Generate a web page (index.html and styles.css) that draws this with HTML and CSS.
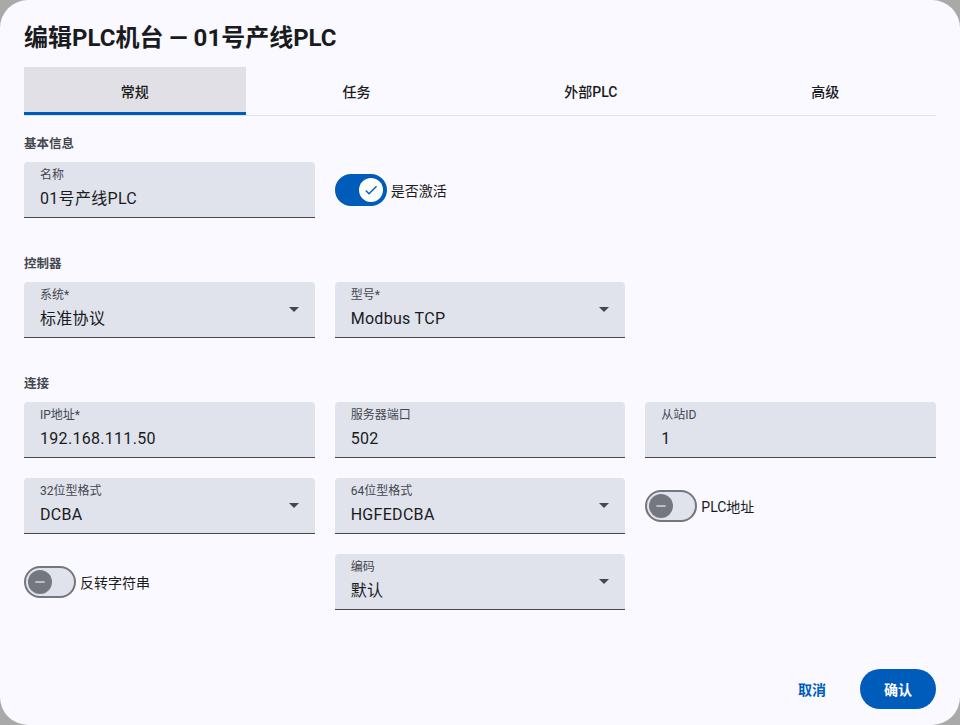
FILE: index.html
```html
<!DOCTYPE html>
<html lang="zh-CN">
<head>
    <meta charset="UTF-8">
    <meta name="viewport" content="width=device-width, initial-scale=1.0">
    <title>编辑PLC机台</title>
    <link rel="stylesheet" href="styles.css">
</head>
<body>
    <div class="dialog">
        <h2 class="dialog-title">编辑PLC机台 — 01号产线PLC</h2>

        <nav class="tabs">
            <div class="tab active">常规</div>
            <div class="tab">任务</div>
            <div class="tab">外部PLC</div>
            <div class="tab">高级</div>
        </nav>

        <!-- 基本信息 -->
        <section class="section first">
            <h3 class="section-title">基本信息</h3>
            <div class="form-grid">
                <div class="field">
                    <span class="field-label">名称</span>
                    <span class="field-value">01号产线PLC</span>
                </div>
                <label class="toggle">
                    <span class="switch on">
                        <span class="thumb">
                            <svg viewBox="0 0 24 24"><path d="M9 16.17L4.83 12l-1.42 1.41L9 19 21 7l-1.41-1.41z"/></svg>
                        </span>
                    </span>
                    是否激活
                </label>
            </div>
        </section>

        <!-- 控制器 -->
        <section class="section">
            <h3 class="section-title">控制器</h3>
            <div class="form-grid">
                <div class="field select">
                    <span class="field-label">系统*</span>
                    <span class="field-value">标准协议</span>
                    <span class="arrow"></span>
                </div>
                <div class="field select">
                    <span class="field-label">型号*</span>
                    <span class="field-value">Modbus TCP</span>
                    <span class="arrow"></span>
                </div>
            </div>
        </section>

        <!-- 连接 -->
        <section class="section">
            <h3 class="section-title">连接</h3>
            <div class="form-grid">
                <div class="field">
                    <span class="field-label">IP地址*</span>
                    <span class="field-value">192.168.111.50</span>
                </div>
                <div class="field">
                    <span class="field-label">服务器端口</span>
                    <span class="field-value">502</span>
                </div>
                <div class="field">
                    <span class="field-label">从站ID</span>
                    <span class="field-value">1</span>
                </div>

                <div class="field select">
                    <span class="field-label">32位型格式</span>
                    <span class="field-value">DCBA</span>
                    <span class="arrow"></span>
                </div>
                <div class="field select">
                    <span class="field-label">64位型格式</span>
                    <span class="field-value">HGFEDCBA</span>
                    <span class="arrow"></span>
                </div>
                <label class="toggle">
                    <span class="switch">
                        <span class="thumb">
                            <svg viewBox="0 0 24 24"><path d="M19 13H5v-2h14v2z"/></svg>
                        </span>
                    </span>
                    PLC地址
                </label>

                <label class="toggle">
                    <span class="switch">
                        <span class="thumb">
                            <svg viewBox="0 0 24 24"><path d="M19 13H5v-2h14v2z"/></svg>
                        </span>
                    </span>
                    反转字符串
                </label>
                <div class="field select">
                    <span class="field-label">编码</span>
                    <span class="field-value">默认</span>
                    <span class="arrow"></span>
                </div>
            </div>
        </section>

        <div class="actions">
            <button class="btn text">取消</button>
            <button class="btn filled">确认</button>
        </div>
    </div>
</body>
</html>
```

FILE: styles.css
```css
body {
    margin: 0;
    background-color: #a9a9a9;
    font-family: Roboto, "Noto Sans CJK SC", sans-serif;
    color: #1a1b20;
}

.dialog {
    width: 960px;
    height: 725px;
    box-sizing: border-box;
    padding: 22px 24px 16px;
    background-color: #f9f9ff;
    border-radius: 28px;
    display: flex;
    flex-direction: column;
}

.dialog-title {
    margin: 0;
    font-size: 24px;
    line-height: 32px;
    font-weight: 700;
}

.tabs {
    margin-top: 13px;
    display: flex;
    border-bottom: 1px solid #e0e2e8;
}

.tab {
    flex: 1 1 auto;
    height: 48px;
    display: flex;
    align-items: center;
    justify-content: center;
    font-size: 14px;
    font-weight: 500;
}

.tab.active {
    background-color: #e0e0e6;
    box-shadow: inset 0 -3px 0 #005cbb;
}

.section {
    margin-top: 36px;
}

.section.first {
    margin-top: 18px;
}

.section-title {
    margin: 0 0 8px;
    font-size: 12.5px;
    line-height: 20px;
    font-weight: 700;
    color: #44474e;
}

.form-grid {
    display: grid;
    grid-template-columns: repeat(3, 1fr);
    column-gap: 20px;
    row-gap: 20px;
    align-items: center;
}

.field {
    position: relative;
    height: 56px;
    box-sizing: border-box;
    padding: 5px 16px 0;
    background-color: #e0e2ec;
    border-radius: 4px 4px 0 0;
    border-bottom: 1px solid #44474e;
    display: flex;
    flex-direction: column;
}

.field-label {
    font-size: 12px;
    line-height: 16px;
    color: #44474e;
}

.field-value {
    margin-top: 4px;
    font-size: 16px;
    line-height: 24px;
    letter-spacing: 0.3px;
}

.field .arrow {
    position: absolute;
    right: 16px;
    top: 25px;
    width: 0;
    height: 0;
    border-left: 5px solid transparent;
    border-right: 5px solid transparent;
    border-top: 5px solid #44474e;
}

.toggle {
    display: flex;
    align-items: center;
    gap: 4px;
    font-size: 14px;
}

.switch {
    width: 52px;
    height: 32px;
    box-sizing: border-box;
    border-radius: 16px;
    border: 2px solid #74777f;
    background-color: #e0e2ec;
    display: flex;
    align-items: center;
    padding: 0 2px;
}

.switch .thumb {
    width: 24px;
    height: 24px;
    border-radius: 50%;
    background-color: #74777f;
    display: flex;
    align-items: center;
    justify-content: center;
}

.switch .thumb svg {
    width: 16px;
    height: 16px;
    fill: #e0e2ec;
}

.switch.on {
    background-color: #005cbb;
    border-color: #005cbb;
    justify-content: flex-end;
}

.switch.on .thumb {
    background-color: #ffffff;
}

.switch.on .thumb svg {
    fill: #005cbb;
}

.actions {
    margin-top: auto;
    display: flex;
    justify-content: flex-end;
    gap: 10px;
}

.btn {
    height: 40px;
    padding: 0 24px;
    border: none;
    border-radius: 20px;
    font-family: inherit;
    font-size: 14px;
    font-weight: 700;
    cursor: pointer;
}

.btn.text {
    background: none;
    color: #005cbb;
}

.btn.filled {
    background-color: #005cbb;
    color: #ffffff;
}
```
